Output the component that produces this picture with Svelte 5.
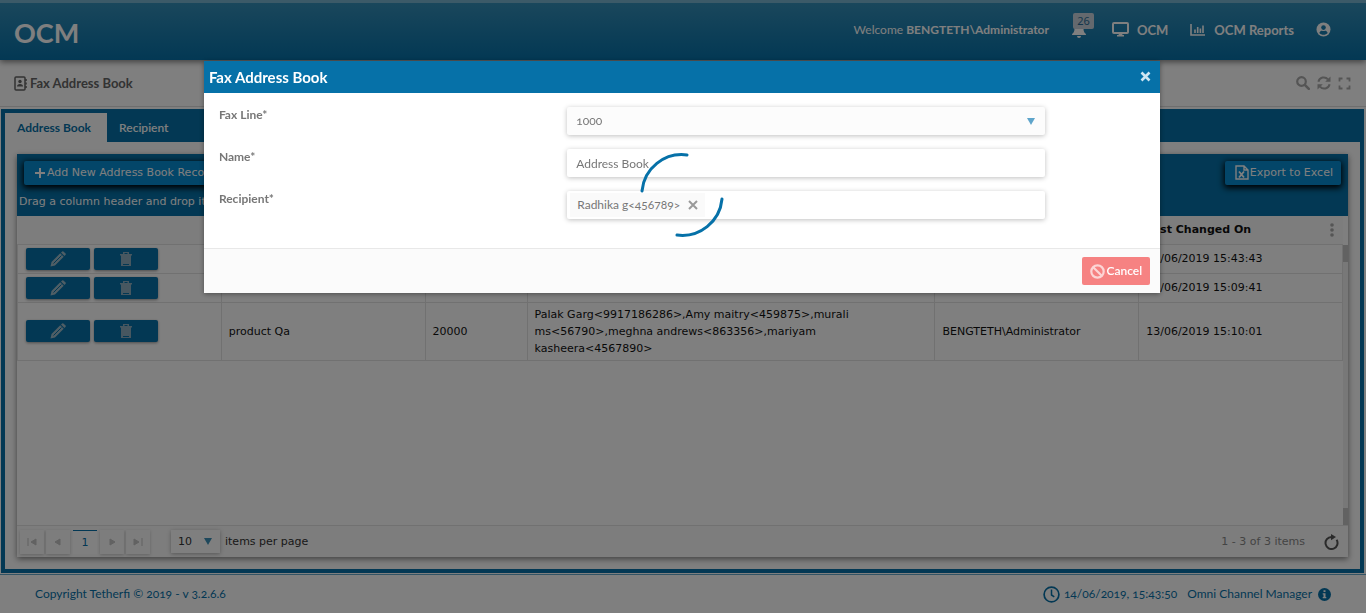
<script>
  const rows = [
    { name: 'Sales', line: '1000', recipients: 'Radhika', by: 'BENGTETH\\Administrator', on: '14/06/2019 15:43:43' },
    { name: 'Address Book', line: '1000', recipients: 'Radhika', by: 'BENGTETH\\Administrator', on: '14/06/2019 15:09:41' },
    { name: 'product Qa', line: '20000', recipients: 'Palak Garg<9917186286>,Amy maitry<459875>,murali ms<56790>,meghna andrews<863356>,mariyam kasheera<4567890>', by: 'BENGTETH\\Administrator', on: '13/06/2019 15:10:01' }
  ];
  const pagers = [
    ['First page', 'M3 3v8M11 4v6L6 7z'],
    ['Previous page', 'M9 4v6L4 7z'],
    ['Next page', 'M5 4v6l5-3z'],
    ['Last page', 'M3 4v6l5-3zM11 3v8']
  ];
  let name = $state('Address Book');
</script>

{#snippet pager(p)}
  <button class="pg" aria-label={p[0]}>
    <svg width="14" height="14" viewBox="0 0 14 14"><path d={p[1]} fill="currentColor" stroke="currentColor" /></svg>
  </button>
{/snippet}

<div class="page">
  <header class="top">
    <div class="logo">OCM</div>
    <nav>
      <span class="welcome">Welcome <b>BENGTETH\Administrator</b></span>
      <a href="#alerts" class="bell" aria-label="Notifications">
        <svg width="14" height="16" viewBox="0 0 14 16"><path d="M7 0a1 1 0 0 0-1 1v1C3.600 2.500 2.500 4.300 2.500 6.500c0 3-.8 4.200-2.200 5.300-.5.500-.3 1.200.4 1.200h12.600c.7 0 .9-.7.4-1.200-1.400-1.100-2.200-2.300-2.200-5.300C11.500 4.300 10.400 2.500 8 2V1a1 1 0 0 0-1-1zM5 14a2 2 0 0 0 4 0z" fill="#fff" /></svg>
        <span class="count">26</span>
      </a>
      <a href="#ocm" class="ocm">
        <svg width="17" height="15" viewBox="0 0 17 15"><path d="M2 1h13q1 0 1 1v8q0 1-1 1H2q-1 0-1-1V2q0-1 1-1z" fill="none" stroke="#fff" stroke-width="2" /><path d="M7 11h3l.5 2H12v1.500H5V13h1.500z" fill="#fff" /></svg>
        OCM
      </a>
      <a href="#reports" class="reports">
        <svg width="16" height="13" viewBox="0 0 16 13"><path d="M1 1v11h14M5 10V6.500M7.700 10V4M10.400 10V5.500M13 10V2.500" fill="none" stroke="#fff" stroke-width="1.600" /></svg>
        OCM Reports
      </a>
      <a href="#account" class="account" aria-label="Account">
        <svg width="15" height="15" viewBox="0 0 15 15"><circle cx="7.500" cy="7.500" r="7" fill="#fff" /><circle cx="7.500" cy="5.600" r="2.300" fill="#1a7cae" /><path d="M3.300 11c.6-1.700 1.700-2.300 2.600-2.300.9.500 2.300.5 3.200 0 .9 0 2 .6 2.600 2.300-2 2.400-6.400 2.400-8.400 0z" fill="#1a7cae" /></svg>
      </a>
    </nav>
  </header>

  <div class="crumb">
    <h1>
      <svg width="13" height="15" viewBox="0 0 13 15"><rect x="1" y="1" width="10" height="13" rx="1" fill="none" stroke="#666" stroke-width="1.500" /><path d="M12 3v2M12 6.500v2M12 10v2" stroke="#666" stroke-width="1.500" /><circle cx="6" cy="5.500" r="1.700" fill="#666" /><path d="M3 10.500q0-2.500 3-2.500t3 2.500z" fill="#666" /></svg>
      Fax Address Book
    </h1>
    <div class="tools">
      <button aria-label="Search"><svg width="14" height="14" viewBox="0 0 14 14"><circle cx="5.500" cy="5.500" r="4.300" fill="none" stroke="#aaa" stroke-width="2.200" /><path d="M8.800 8.800l4 4" stroke="#aaa" stroke-width="2.600" stroke-linecap="round" /></svg></button>
      <button aria-label="Refresh"><svg width="14" height="14" viewBox="0 0 14 14"><path d="M1.400 5.800A5.500 5.500 0 0 1 11 3.400M12.600 8.200A5.500 5.500 0 0 1 3 10.600" fill="none" stroke="#aaa" stroke-width="2" /><path d="M13.500.5v5.300H8.200zM.5 13.500V8.200h5.300z" fill="#aaa" /></svg></button>
      <button aria-label="Full screen"><svg width="13" height="13" viewBox="0 0 13 13"><path d="M1.500 4.500v-3h3M8.500 1.500h3v3M11.500 8.500v3h-3M4.500 11.500h-3v-3" fill="none" stroke="#aaa" stroke-width="1.800" /></svg></button>
    </div>
  </div>

  <main>
    <div class="tabs" role="tablist">
      <button role="tab" aria-selected="true" class="on">Address Book</button>
      <button role="tab" aria-selected="false">Recipient</button>
    </div>
    <section class="grid">
      <div class="toolbar">
        <div class="bar">
          <button class="act"><svg width="12" height="12" viewBox="0 0 12 12"><path d="M6 1v10M1 6h10" stroke="#fff" stroke-width="2" /></svg>Add New Address Book Record</button>
          <button class="act"><svg width="14" height="15" viewBox="0 0 14 15"><path d="M1 1h8l4 4v9H1zM9 1v4h4" fill="none" stroke="#fff" stroke-width="1.400" /><path d="M4 6.500l5 6M9 6.500l-5 6" stroke="#fff" stroke-width="1.800" /></svg>Export to Excel</button>
        </div>
        <p>Drag a column header and drop it here to group by that column</p>
      </div>
      <div class="body">
        <table>
          <colgroup><col class="c2" /><col class="c2" /><col class="c1" /><col class="c4" /><col class="c2" /><col class="c2" /></colgroup>
          <thead>
            <tr><th></th><th>Name</th><th>Fax Line</th><th>Recipient</th><th>Last Changed By</th><th><span class="last">Last Changed On <svg width="4" height="14" viewBox="0 0 4 14"><circle cx="2" cy="2" r="1.800" fill="#aaa" /><circle cx="2" cy="7" r="1.800" fill="#aaa" /><circle cx="2" cy="12" r="1.800" fill="#aaa" /></svg></span></th></tr>
          </thead>
          <tbody>
            {#each rows as r}
              <tr>
                <td class="cmd">
                  <div class="cmds">
                    <button aria-label="Edit"><svg width="16" height="16" viewBox="0 0 16 16"><path d="M.5 15.500l1-4.500 8.700-8.700 3.500 3.500L5 14.500zM11 1.500L12.200.4q.6-.5 1.200 0l2.200 2.200q.5.600 0 1.200L14.500 5z" fill="#9fbccb" /><path d="M3.500 12.500l8-8" stroke="#0671a8" /></svg></button>
                    <button aria-label="Delete"><svg width="12" height="14" viewBox="0 0 12 14"><path d="M0 2h3V0h6v2h3v1.500H0zM1 3.500h10V14H1z" fill="#8fafc0" /><path d="M4.500 1.500h3M3 12.500h6" stroke="#0671a8" /></svg></button>
                  </div>
                </td>
                <td>{r.name}</td><td>{r.line}</td><td>{r.recipients}</td><td>{r.by}</td><td>{r.on}</td>
              </tr>
            {/each}
          </tbody>
        </table>
        <div class="scroll"><i></i><i></i></div>
      </div>
      <div class="pager">
        {@render pager(pagers[0])}
        {@render pager(pagers[1])}
        <button class="cur">1</button>
        {@render pager(pagers[2])}
        {@render pager(pagers[3])}
        <span class="size">
          <select id="size" aria-label="Page size"><option>10</option></select>
          <svg width="8" height="7" viewBox="0 0 8 7"><path d="M0 0h8L4 7z" fill="#3d90b8" /></svg>
        </span>
        <label for="size">items per page</label>
        <span class="info">1 - 3 of 3 items</span>
        <button class="reload" aria-label="Reload"><svg width="15" height="16" viewBox="0 0 15 16"><path d="M7.500 3A6 6 0 1 0 12.600 5.800" fill="none" stroke="#555" stroke-width="2" /><path d="M7 0l5 3-5 3.300z" fill="#555" /></svg></button>
      </div>
    </section>
  </main>

  <footer>
    <span>Copyright Tetherfi © 2019 - v 3.2.6.6</span>
    <span class="right">
      <svg width="17" height="17" viewBox="0 0 17 17"><circle cx="8.500" cy="8.500" r="7.400" fill="none" stroke="currentColor" stroke-width="1.700" /><path d="M8.500 3.500V9l2.800 1.800" fill="none" stroke="currentColor" stroke-width="1.500" /></svg>
      <span>14/06/2019, 15:43:50</span>
      <span class="ocmname">Omni Channel Manager</span>
      <svg width="13" height="13" viewBox="0 0 13 13"><circle cx="6.500" cy="6.500" r="6.500" fill="currentColor" /><path d="M5.500 2.300h2v1.700h-2zM4.700 5.200h2.800v3.800h.8v1.300H4.700V9h.8V6.500h-.8z" fill="#fff" /></svg>
    </span>
  </footer>
</div>

<div class="shade">
  <div class="modal" role="dialog" aria-labelledby="dlg">
    <div class="head">
      <h2 id="dlg">Fax Address Book</h2>
      <button aria-label="Close"><svg width="11" height="11" viewBox="0 0 11 11"><path d="M1.500 1.500l8 8M9.500 1.500l-8 8" stroke="#cfe6f2" stroke-width="2.600" /></svg></button>
    </div>
    <form>
      <label for="line">Fax Line*</label>
      <div class="field grey">
        <select id="line"><option>1000</option></select>
        <svg width="8" height="7" viewBox="0 0 8 7"><path d="M0 0h8L4 7z" fill="#5fa5cb" /></svg>
      </div>
      <label for="name">Name*</label>
      <div class="field"><input id="name" bind:value={name} /></div>
      <label for="rcpt">Recipient*</label>
      <div class="field">
        <span class="chip">Radhika g&lt;456789&gt; <button type="button" aria-label="Remove"><svg width="10" height="10" viewBox="0 0 10 10"><path d="M1 1l8 8M9 1L1 9" stroke="#999" stroke-width="2" /></svg></button></span>
        <input id="rcpt" />
      </div>
    </form>
    <div class="foot">
      <button class="cancel"><svg width="15" height="15" viewBox="0 0 15 15"><circle cx="7.500" cy="7.500" r="6.200" fill="none" stroke="#fcd5d5" stroke-width="2.200" /><path d="M3.200 3.200l8.600 8.600" stroke="#fcd5d5" stroke-width="2.200" /></svg>Cancel</button>
    </div>
    <svg class="spin" width="84" height="84" viewBox="0 0 84 84"><path d="M2 38A40 40 0 0 1 47 2M82 46A40 40 0 0 1 37 82" fill="none" stroke="#0671a8" stroke-width="3" stroke-linecap="round" /></svg>
  </div>
</div>

<style>
  :global(body) { background: #fff; }
  :global(*) { box-sizing: border-box; }
  .page, .shade { font: 12px/16px "Lato", sans-serif; font-variant-numeric: oldstyle-nums; }
  button, input, select { font: inherit; font-variant-numeric: inherit; color: inherit; border: 0; padding: 0; margin: 0; background: none; }
  a { color: inherit; text-decoration: none; }
  svg { flex: none; }
  h1, h2, p { margin: 0; }

  .page { min-height: 100vh; display: flex; flex-direction: column; }
  .top { height: 60px; display: flex; align-items: center; justify-content: space-between; padding: 0 35px 4px 14px; border-top: 3px solid #78b4d0; background: linear-gradient(#348eb8, #0671a8); color: #fff; box-shadow: 0 2px 6px rgba(0, 0, 0, .5); z-index: 1; }
  .logo { font-size: 27px; line-height: 32px; font-weight: 700; padding-top: 6px; }
  nav { display: flex; align-items: center; font-weight: 700; }
  nav a { display: flex; align-items: center; gap: 8px; font-size: 13px; }
  .welcome { font-weight: 400; }
  .bell { position: relative; margin: 0 26px 0 23px; }
  .count { position: absolute; left: 1px; top: -9px; width: 21px; height: 16px; border-radius: 2px; background: #c9d3dc; color: #2b6d97; font: 11px/16px "Noto Sans", sans-serif; text-align: center; }
  .reports { margin: 0 22px; }

  .crumb { height: 47px; display: flex; align-items: center; justify-content: space-between; padding: 0 15px 0 14px; border-bottom: 1px solid #ddd; }
  h1 { display: flex; align-items: center; gap: 3px; font-size: 13px; color: #666; }
  .tools { display: flex; gap: 7px; }
  .tools button, .head button { display: flex; align-items: center; }

  main { flex: 1; display: flex; flex-direction: column; margin: 2px 2px 0 1px; border: 4px solid #0671a8; }
  .tabs { display: flex; height: 29px; background: #0671a8; }
  .tabs button { padding: 0 12px; color: #fff; font-weight: 600; }
  .tabs .on { background: #fff; color: #0671a8; font-weight: 700; padding: 0 16px 0 12px; }
  .grid { flex: 1; display: flex; flex-direction: column; margin: 12px; box-shadow: 0 2px 6px rgba(0, 0, 0, .5); font: 11px/17px "DejaVu Sans", sans-serif; font-variant-numeric: normal; }
  .toolbar { background: #0671a8; color: #fff; height: 62px; padding: 7px; }
  .toolbar p { margin: 8px -5px 0; }
  .bar { display: flex; justify-content: space-between; }
  .act { height: 24px; padding: 0 8px 1px 10px; display: flex; align-items: center; gap: 1px; border-radius: 2px; background: #068cd2; box-shadow: 0 2px 6px 1px #000; }
  .body { flex: 1; display: flex; align-items: stretch; background: #fff; }
  table { flex: 1; width: 100%; table-layout: fixed; border-collapse: collapse; align-self: flex-start; color: #111; }
  .c1 { width: 7.7%; }
  .c2 { width: 15.38%; }
  .c4 { width: 30.78%; }
  th { height: 28px; padding: 0 7px; text-align: left; font-weight: 700; background: #fafafa; border-bottom: 1px solid #e2e2e2; }
  .last { display: flex; justify-content: space-between; align-items: center; }
  .last svg { margin-right: 2px; }
  td { height: 29px; padding: 3px 7px; border: 1px solid #e2e2e2; border-top: 0; }
  .body td.cmd { padding: 0 8px; border-left: 1px solid #e2e2e2; }
  .cmds { display: flex; gap: 4px; }
  .cmds button { width: 64px; height: 22px; display: flex; align-items: center; justify-content: center; border-radius: 2px; background: #0671a8; box-shadow: 0 1px 3px rgba(0, 0, 0, .4); }
  .scroll { width: 5px; margin-top: 29px; background: #f0f0f0; display: flex; flex-direction: column; justify-content: space-between; }
  .scroll i { height: 17px; background: #c4c4c4; }
  .pager { height: 32px; display: flex; align-items: center; padding: 0 9px 0 3px; gap: 2px; border-top: 1px solid #e2e2e2; background: #fafafa; color: #333; }
  .pg, .cur { width: 24px; height: 24px; display: flex; align-items: center; justify-content: center; color: #c4c4c4; box-shadow: 0 1px 3px rgba(0, 0, 0, .2); }
  .pager .cur { color: #0671a8; border-top: 1px solid #0671a8; box-shadow: none; background: #fff; margin: 0 1px; }
  .size { position: relative; width: 49px; height: 23px; margin: 0 3px 0 19px; background: #fff; box-shadow: 0 1px 4px rgba(0, 0, 0, .3); }
  select { appearance: none; width: 100%; height: 100%; padding: 0 7px; }
  .size svg, .field > svg { position: absolute; right: 8px; top: 8px; pointer-events: none; }
  .info { margin-left: auto; color: #888; }
  .reload { display: flex; margin-left: 17px; }

  footer { height: 39px; margin-top: 1px; border-top: 1px solid #64a9cb; display: flex; align-items: center; justify-content: space-between; padding: 0 35px; color: #0671a8; }
  .right { display: flex; align-items: center; gap: 4px; }
  .ocmname { margin: 0 2px 0 6px; }

  .shade { position: fixed; inset: 0; z-index: 5; background: rgba(0, 0, 0, .5); padding-top: 61px; }
  .modal { position: relative; width: 70%; margin-left: calc(15% - 1px); background: #fff; box-shadow: 0 1px 5px rgba(0, 0, 0, .4); }
  .head { height: 32px; display: flex; align-items: center; justify-content: space-between; padding: 0 9px 2px 5px; background: #0671a8; color: #fff; }
  h2 { font-size: 15px; line-height: 20px; padding-top: 2px; }
  form { display: grid; grid-template-columns: 38% 50%; row-gap: 14px; padding: 14px 0 29px; color: #777; border-bottom: 1px solid #e8e8e8; }
  form > label { padding-left: 15px; font-weight: 700; }
  .field { position: relative; display: flex; align-items: center; height: 28px; border-radius: 2px; box-shadow: 0 1px 5px rgba(0, 0, 0, .25); }
  .field.grey { background: #fcfcfc; }
  .field input { flex: 1; min-width: 0; height: 100%; padding: 0 9px; }
  .field select { padding: 0 9px; }
  .field > svg { right: 10px; top: 11px; }
  .chip { display: flex; align-items: center; gap: 8px; height: 24px; margin-left: 3px; padding: 0 7px; background: #fafafa; }
  .chip button { display: flex; }
  .foot { display: flex; justify-content: flex-end; padding: 8px 10px; background: #fbfbfb; }
  .cancel { height: 28px; display: flex; align-items: center; gap: 1px; padding: 0 8px; border-radius: 2px; background: #f68282; color: #fff; font-weight: 600; }
  .spin { position: absolute; left: 50%; top: 50%; margin: -24px 0 0 -42px; }
</style>
